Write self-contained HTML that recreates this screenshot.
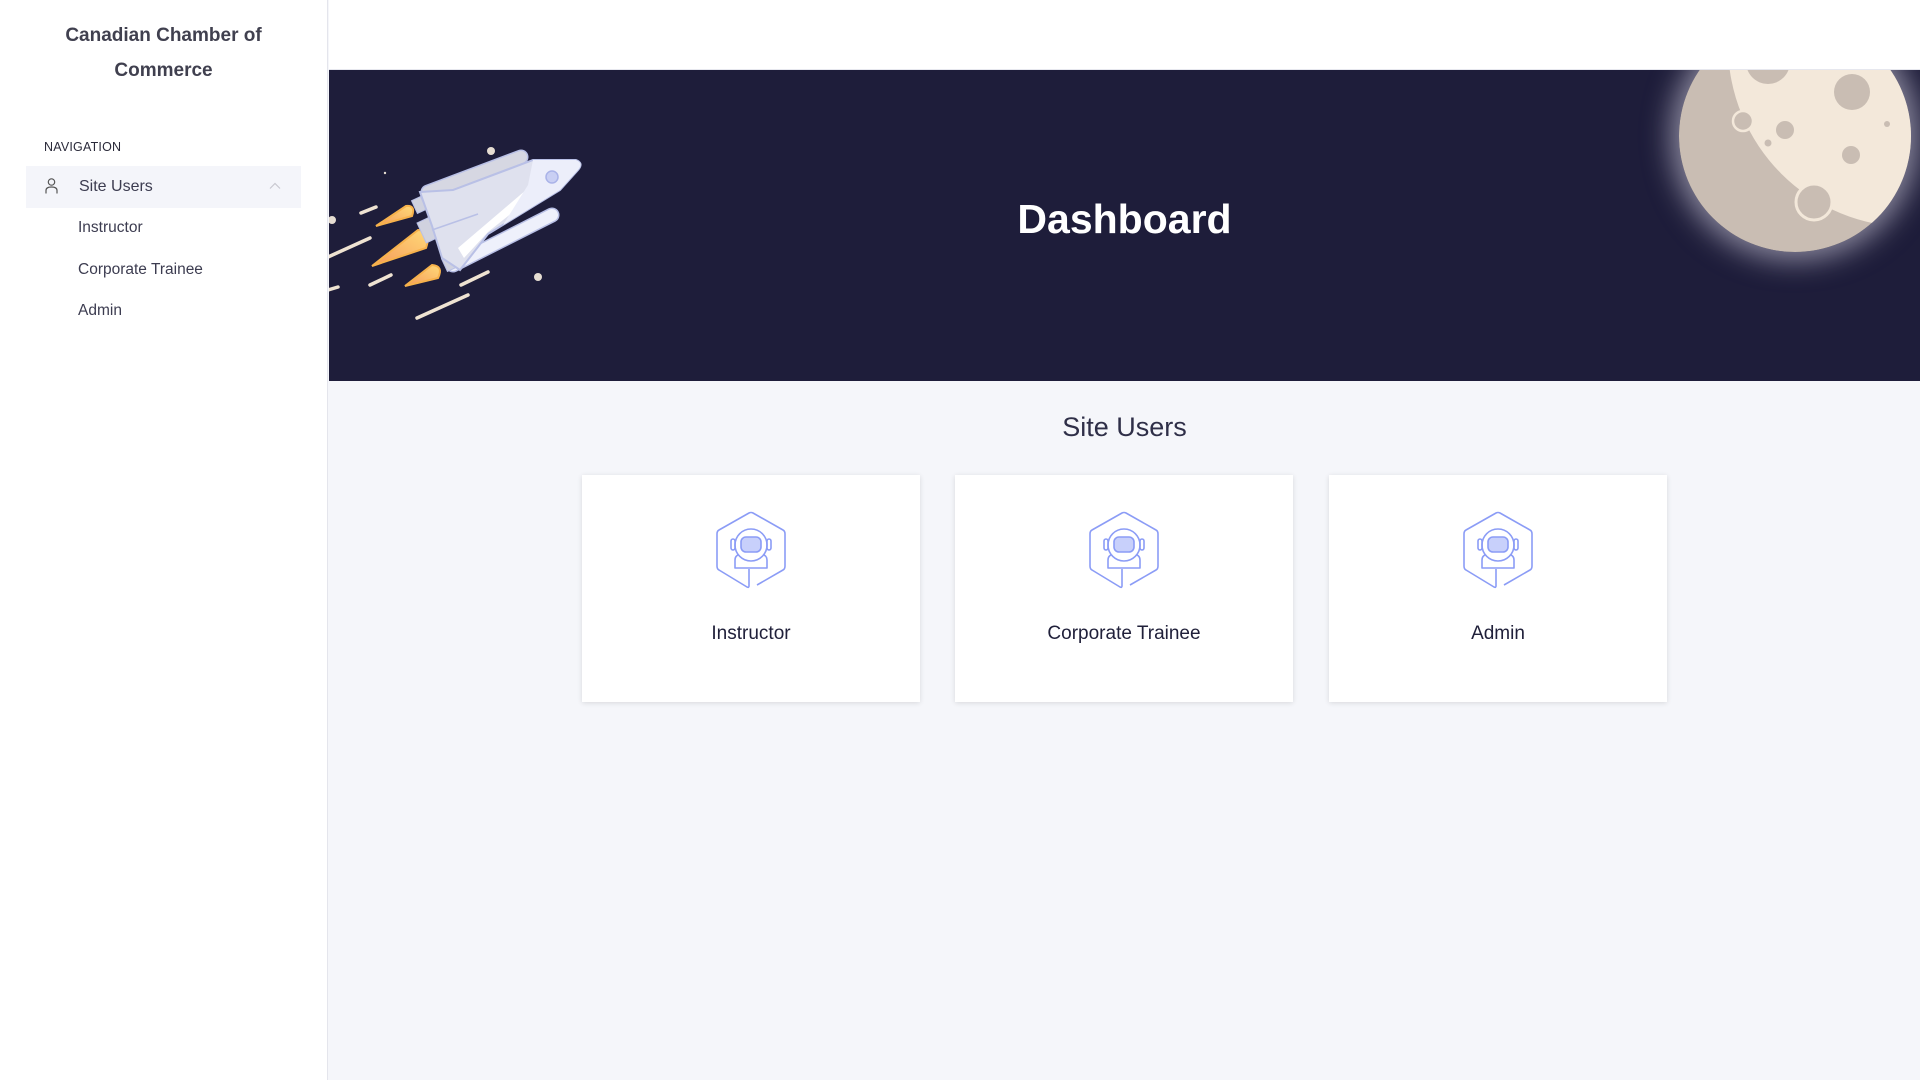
<!DOCTYPE html>
<html><head><meta charset="utf-8"><style>
*{margin:0;padding:0;box-sizing:border-box}
body{width:1920px;height:1080px;overflow:hidden;background:#f5f6fa;font-family:"Liberation Sans",sans-serif;position:relative}
.side{position:absolute;left:0;top:0;width:328px;height:1080px;background:#fff;border-right:1px solid #e4e5ec}
.brand{position:absolute;left:0;width:327px;top:18px;text-align:center;font-weight:bold;font-size:19px;line-height:35px;color:#40404f}
.nav{position:absolute;left:44px;top:140px;font-size:12.5px;color:#2a2a3a;letter-spacing:.2px}
.row{position:absolute;left:26px;top:166px;width:275px;height:42px;background:#f4f5fa}
.row span{position:absolute;left:53px;top:12px;font-size:16px;color:#3c3c50}
.sub{position:absolute;left:78px;font-size:15.5px;color:#3c3c50}
.top{position:absolute;left:329px;top:0;right:0;height:70px;background:#fff;border-bottom:1px solid #e6e7ee}
.banner{position:absolute;left:329px;top:70px;right:0;height:311px;background:#1e1d3a;overflow:hidden}
.dash{position:absolute;left:0;right:0;top:126px;text-align:center;color:#fff;font-weight:bold;font-size:41px}
.moon{position:absolute;left:1350px;top:-50px;width:232px;height:232px;border-radius:50%;box-shadow:0 0 28px 8px rgba(230,225,240,.55)}
.title{position:absolute;left:329px;right:0;top:412px;text-align:center;font-size:27px;color:#2f2f48}
.card{position:absolute;top:475px;width:338px;height:227px;background:#fff;box-shadow:0 1px 5px rgba(0,0,0,.12)}
.card svg{position:absolute;left:133px;top:33px}
.card div{position:absolute;left:0;right:0;top:148px;text-align:center;font-size:19px;color:#20203a}
</style></head><body>
<div class="side">
<div class="brand">Canadian Chamber of<br>Commerce</div>
<div class="nav">NAVIGATION</div>
<div class="row">
<svg style="position:absolute;left:19px;top:12px" width="13" height="16" viewBox="0 0 13 16"><circle cx="6.5" cy="4" r="3.2" fill="none" stroke="#555" stroke-width="1.2"/><path d="M1,15.5 V12.5 Q1,9 6.5,9 Q12,9 12,12.5 V15.5" fill="none" stroke="#555" stroke-width="1.2"/></svg>
<span>Site Users</span>
<svg style="position:absolute;left:243px;top:16px" width="12" height="8" viewBox="0 0 12 8"><path d="M1,6.5 L6,1.5 L11,6.5" fill="none" stroke="#c8c8d0" stroke-width="1.2"/></svg>
</div>
<div class="sub" style="top:219px">Instructor</div>
<div class="sub" style="top:261px">Corporate Trainee</div>
<div class="sub" style="top:302px">Admin</div>
</div>
<div class="top"></div>
<div class="banner">
<svg style="position:absolute;left:-1px;top:60px" width="270" height="200" viewBox="0 0 270 200">
<defs><linearGradient id="fl" x1="0" y1="1" x2="1" y2="0"><stop offset="0" stop-color="#f59a5a"/><stop offset="1" stop-color="#ffd978"/></linearGradient></defs>
<g stroke="#efe3d2" stroke-width="3.5" stroke-linecap="round">
<line x1="33" y1="83" x2="48" y2="77"/><line x1="0" y1="127" x2="42" y2="108"/><line x1="42" y1="155" x2="63" y2="145"/><line x1="0" y1="160" x2="10" y2="157"/><line x1="133" y1="155" x2="160" y2="142"/><line x1="89" y1="188" x2="140" y2="165"/></g>
<g fill="#e6ddd2"><circle cx="163" cy="21" r="4"/><circle cx="4" cy="90" r="4"/><circle cx="210" cy="147" r="4"/><circle cx="57" cy="43" r="1.2"/></g>
<path d="M48,96 L78,76 Q88,75 84,86 Z" fill="url(#fl)" stroke="#f7b24c" stroke-width="2"/>
<path d="M44,136 L90,100 Q104,100 98,118 Z" fill="url(#fl)" stroke="#f7b24c" stroke-width="2"/>
<path d="M77,156 L104,135 Q116,136 110,148 Z" fill="url(#fl)" stroke="#f7b24c" stroke-width="2"/>
<line x1="100" y1="62" x2="193" y2="27" stroke="#b9c0e6" stroke-width="15" stroke-linecap="round"/>
<line x1="100" y1="62" x2="193" y2="27" stroke="#d6d7e2" stroke-width="12" stroke-linecap="round"/>
<line x1="125" y1="135" x2="224" y2="85" stroke="#b9c0e6" stroke-width="15" stroke-linecap="round"/>
<line x1="125" y1="135" x2="224" y2="85" stroke="#eef0fb" stroke-width="12" stroke-linecap="round"/>
<rect x="86" y="68" width="10" height="14" fill="#d0d2df" stroke="#b9c0e6" transform="rotate(-25 91 75)"/>
<rect x="93" y="89" width="14" height="22" fill="#d0d2df" stroke="#b9c0e6" transform="rotate(-25 100 100)"/>
<rect x="116" y="126" width="10" height="14" fill="#d0d2df" stroke="#b9c0e6" transform="rotate(-25 121 133)"/>
<path d="M92,62 L125,60 L205,30 L248,30 Q256,33 250,40 L232,60 L160,104 L132,140 L114,128 L104,96 Z" fill="#dfe1ee" stroke="#b9c0e6" stroke-width="2"/>
<path d="M130,118 L198,60 Q210,55 205,66 L160,102 L136,128 Z" fill="#fff"/>
<path d="M205,30 L248,30 Q256,33 250,40 L232,60 L175,95 L200,55 Z" fill="#eceefa"/>
<path d="M104,100 L150,84" stroke="#b9c0e6" stroke-width="1.5"/>
<circle cx="224" cy="47" r="6" fill="#c9cff3" stroke="#aab3e8" stroke-width="1.5"/>
</svg>
<div class="dash">Dashboard</div>
<div class="moon"><svg width="232" height="232" viewBox="1679 20 232 232" style="display:block">
<defs><clipPath id="mc"><circle cx="1795" cy="136" r="116"/></clipPath></defs>
<g clip-path="url(#mc)">
<rect x="1679" y="20" width="232" height="232" fill="#c9bdb3"/>
<circle cx="1910" cy="45" r="182" fill="#f3e8da"/>
<g fill="#c9bdb3"><circle cx="1768" cy="62" r="22"/><circle cx="1852" cy="92" r="18"/><circle cx="1785" cy="130" r="9"/><circle cx="1768" cy="143" r="3.5"/><circle cx="1851" cy="155" r="9"/><circle cx="1887" cy="124" r="3"/></g>
<circle cx="1743" cy="121" r="10" fill="#c9bdb3" stroke="#f3e8da" stroke-width="2.5"/>
<circle cx="1814" cy="202" r="18" fill="#c9bdb3" stroke="#f3e8da" stroke-width="3"/>
</g></svg></div>
</div>
<div class="title">Site Users</div>
<div class="card" style="left:582px"><svg width="75" height="85" viewBox="0 0 75 85"><g fill="none" stroke="#8b9cf6" stroke-width="1.6" stroke-linejoin="round"><path d="M42,77 L68,62 Q70,61 70,58 L70,26 Q70,23 68,22 L38,5 Q36,4 34,5 L4,22 Q2,23 2,26 L2,58 Q2,61 4,62 L32,79 Q34,80 34,78 L34,61"/><path d="M20,60 L20,52 Q20,47 26,46 L46,46 Q52,47 52,52 L52,60 Z"/><circle cx="36" cy="37" r="16" fill="#fff"/><rect x="16" y="31" width="4" height="11" rx="2"/><rect x="52" y="31" width="4" height="11" rx="2"/><rect x="26" y="29" width="20" height="15" rx="5" fill="#c8d0fb"/></g></svg><div>Instructor</div></div>
<div class="card" style="left:955px"><svg width="75" height="85" viewBox="0 0 75 85"><g fill="none" stroke="#8b9cf6" stroke-width="1.6" stroke-linejoin="round"><path d="M42,77 L68,62 Q70,61 70,58 L70,26 Q70,23 68,22 L38,5 Q36,4 34,5 L4,22 Q2,23 2,26 L2,58 Q2,61 4,62 L32,79 Q34,80 34,78 L34,61"/><path d="M20,60 L20,52 Q20,47 26,46 L46,46 Q52,47 52,52 L52,60 Z"/><circle cx="36" cy="37" r="16" fill="#fff"/><rect x="16" y="31" width="4" height="11" rx="2"/><rect x="52" y="31" width="4" height="11" rx="2"/><rect x="26" y="29" width="20" height="15" rx="5" fill="#c8d0fb"/></g></svg><div>Corporate Trainee</div></div>
<div class="card" style="left:1329px"><svg width="75" height="85" viewBox="0 0 75 85"><g fill="none" stroke="#8b9cf6" stroke-width="1.6" stroke-linejoin="round"><path d="M42,77 L68,62 Q70,61 70,58 L70,26 Q70,23 68,22 L38,5 Q36,4 34,5 L4,22 Q2,23 2,26 L2,58 Q2,61 4,62 L32,79 Q34,80 34,78 L34,61"/><path d="M20,60 L20,52 Q20,47 26,46 L46,46 Q52,47 52,52 L52,60 Z"/><circle cx="36" cy="37" r="16" fill="#fff"/><rect x="16" y="31" width="4" height="11" rx="2"/><rect x="52" y="31" width="4" height="11" rx="2"/><rect x="26" y="29" width="20" height="15" rx="5" fill="#c8d0fb"/></g></svg><div>Admin</div></div>
</body></html>
